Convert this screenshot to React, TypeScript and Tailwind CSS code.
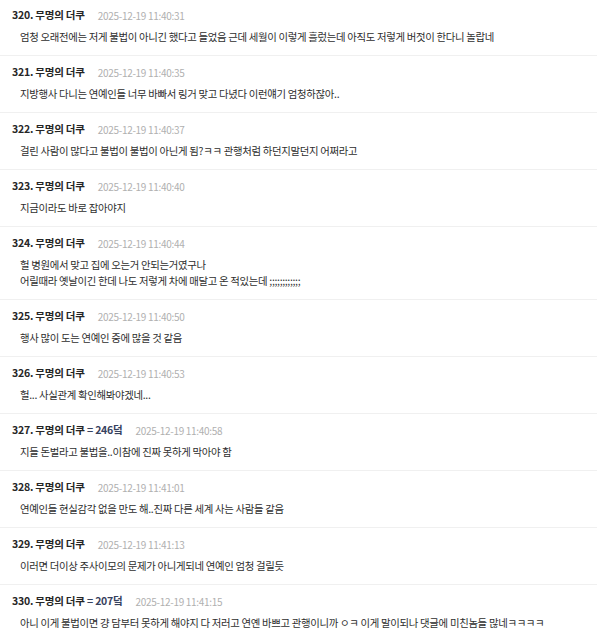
import React from "react";

type C = { n: number; extra?: string; time: string; lines: string[] };

const comments: C[] = [
  { n: 320, time: "11:40:31", lines: ["엄청 오래전에는 저게 불법이 아니긴 했다고 들었음 근데 세월이 이렇게 흘렀는데 아직도 저렇게 버젓이 한다니 놀랍네"] },
  { n: 321, time: "11:40:35", lines: ["지방행사 다니는 연예인들 너무 바빠서 링거 맞고 다녔다 이런얘기 엄청하잖아.."] },
  { n: 322, time: "11:40:37", lines: ["걸린 사람이 많다고 불법이 불법이 아닌게 됨?ㅋㅋ 관행처럼 하던지말던지 어쩌라고"] },
  { n: 323, time: "11:40:40", lines: ["지금이라도 바로 잡아야지"] },
  { n: 324, time: "11:40:44", lines: ["헐 병원에서 맞고 집에 오는거 안되는거였구나", "어릴때라 옛날이긴 한데 나도 저렇게 차에 매달고 온 적있는데 ;;;;;;;;;;;;"] },
  { n: 325, time: "11:40:50", lines: ["행사 많이 도는 연예인 중에 많을 것 같음"] },
  { n: 326, time: "11:40:53", lines: ["헐... 사실관계 확인해봐야겠네..."] },
  { n: 327, extra: "= 246덬", time: "11:40:58", lines: ["지들 돈벌라고 불법을..이참에 진짜 못하게 막아야 함"] },
  { n: 328, time: "11:41:01", lines: ["연예인들 현실감각 없을 만도 해..진짜 다른 세계 사는 사람들 같음"] },
  { n: 329, time: "11:41:13", lines: ["이러면 더이상 주사이모의 문제가 아니게되네 연예인 엄청 걸릴듯"] },
  { n: 330, extra: "= 207덬", time: "11:41:15", lines: ["아니 이게 불법이면 걍 담부터 못하게 해야지 다 저러고 연옌 바쁘고 관행이니까 ㅇㅋ 이게 말이되나 댓글에 미친놈들 많네ㅋㅋㅋㅋ"] },
];

export default function App() {
  return (
    <div
      className="w-[597px] h-[640px] overflow-hidden bg-white"
      style={{ fontFamily: '"Noto Sans CJK KR", "Noto Sans", sans-serif' }}
    >
      {comments.map((c, i) => (
        <div
          key={c.n}
          className={`border-b border-[#f0f0f0] pb-[10px] ${i === 0 ? "pt-[5px]" : "pt-[6px]"}`}
        >
          <div className="flex items-center h-[20px] pl-[12px]">
            <span className="text-[10.5px] font-bold text-[#262626] tracking-[-0.02em]">
              {c.n}. 무명의 더쿠
              {c.extra && <span className="text-[#37425e]"> {c.extra}</span>}
            </span>
            <span className="ml-[13px] text-[10px] text-[#b0b0b0] tracking-[-0.03em]">
              2025-12-19 {c.time}
            </span>
          </div>
          <div className="mt-[4px] pl-[20px] text-[10.4px] leading-[16px] text-[#2e2e2e] tracking-[-0.03em]">
            {c.lines.map((l, j) => (
              <div key={j}>{l}</div>
            ))}
          </div>
        </div>
      ))}
    </div>
  );
}
